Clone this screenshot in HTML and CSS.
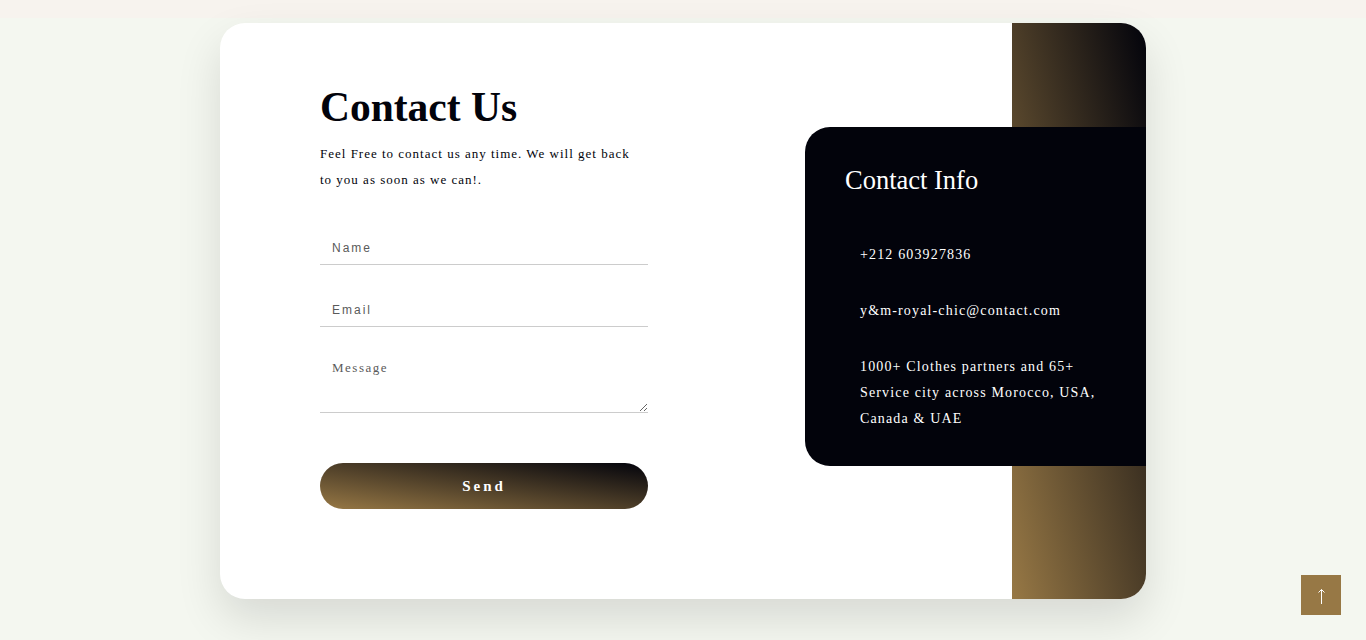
FILE: index.html
```html
<!DOCTYPE html>
<html lang="en">
<head>
<meta charset="utf-8">
<title>Contact Us</title>
<link rel="stylesheet" href="styles.css">
</head>
<body>
<div class="top-strip"></div>
<section class="contact-section">
  <div class="card">
    <div class="form-col">
      <h1 class="title">Contact Us</h1>
      <p class="lead">Feel Free to contact us any time. We will get back to you as soon as we can!.</p>
      <form class="form">
        <input class="field" type="text" placeholder="Name">
        <input class="field" type="email" placeholder="Email">
        <textarea class="field area" placeholder="Message"></textarea>
        <button class="send" type="button">Send</button>
      </form>
    </div>
    <div class="info-col">
      <div class="info-box">
        <h2 class="info-title">Contact Info</h2>
        <ul class="info-list">
          <li>+212 603927836</li>
          <li>y&amp;m-royal-chic@contact.com</li>
          <li>1000+ Clothes partners and 65+ Service city across Morocco, USA, Canada &amp; UAE</li>
        </ul>
      </div>
    </div>
  </div>
</section>
<a class="to-top" href="#" aria-label="Back to top">
  <svg width="40" height="40" viewBox="0 0 40 40" aria-hidden="true">
    <path d="M20.5 14.5 V29" stroke="#ffffff" stroke-width="1" fill="none"/>
    <path d="M17.5 17.5 L20.5 14.5 L23.5 17.5" stroke="#ffffff" stroke-width="1" fill="none"/>
  </svg>
</a>
</body>
</html>
```
FILE: styles.css
```css
* { box-sizing: border-box; }
html, body { margin: 0; padding: 0; }
body {
  background: #f4f7f0;
  font-family: "Liberation Serif", "Times New Roman", serif;
  height: 640px;
  overflow: hidden;
}
.top-strip {
  height: 18px;
  background: #f7f3ee;
}
.contact-section {
  display: flex;
  justify-content: center;
  padding-top: 5px;
}
.card {
  width: 926px;
  height: 576px;
  background: #ffffff;
  border-radius: 25px;
  overflow: hidden;
  display: flex;
  box-shadow: 0 20px 45px rgba(0, 0, 0, 0.12);
}
.form-col {
  width: 585px;
  padding: 60px 0 0 100px;
}
.title {
  margin: 0;
  font-size: 41.5px;
  line-height: 48px;
  font-weight: bold;
  color: #02030b;
}
.lead {
  margin: 10px 0 0;
  width: 318px;
  font-size: 13px;
  line-height: 26px;
  letter-spacing: 1px;
  color: #02030b;
}
.form {
  display: flex;
  flex-direction: column;
  width: 328px;
  margin-top: 31px;
}
.field {
  display: block;
  width: 100%;
  border: none;
  border-bottom: 1px solid #cccccc;
  background: transparent;
  outline: none;
  padding: 8px 12px 0;
  height: 41px;
  font-family: "Liberation Sans", Arial, sans-serif;
  font-size: 12px;
  letter-spacing: 2px;
  color: #333;
}
.field + .field { margin-top: 21px; }
.field::placeholder { color: #5a5a5a; }
.area {
  height: 63px;
  padding-top: 10px;
  margin-top: 23px !important;
  font-family: "Liberation Serif", "Times New Roman", serif;
  font-size: 13px;
  letter-spacing: 1.5px;
  resize: vertical;
}
.send {
  margin-top: 50px;
  height: 46px;
  width: 100%;
  border: none;
  border-radius: 23px;
  background: linear-gradient(to top right, #977845, #02030b);
  color: #ffffff;
  font-family: "Liberation Serif", "Times New Roman", serif;
  font-size: 15px;
  font-weight: bold;
  letter-spacing: 3px;
  cursor: pointer;
}
.info-col {
  flex: 1;
  padding-top: 104px;
  background-image: linear-gradient(to top right, #977845, #02030b);
  background-size: 134px 100%;
  background-position: right top;
  background-repeat: no-repeat;
}
.info-box {
  height: 339px;
  background: #02030b;
  border-radius: 25px 0 0 25px;
  padding: 38px 40px 0 40px;
  color: #ffffff;
}
.info-title {
  margin: 0;
  font-size: 26.5px;
  font-weight: normal;
  line-height: 30px;
}
.info-list {
  list-style: none;
  margin: 47px 0 0;
  padding: 0 0 0 15px;
  display: flex;
  flex-direction: column;
  gap: 30px;
}
.info-list li {
  font-size: 14px;
  line-height: 26px;
  letter-spacing: 1.15px;
}
.to-top {
  position: fixed;
  right: 25px;
  bottom: 25px;
  width: 40px;
  height: 40px;
  background: #977845;
  display: block;
}
.to-top svg { display: block; }
```
